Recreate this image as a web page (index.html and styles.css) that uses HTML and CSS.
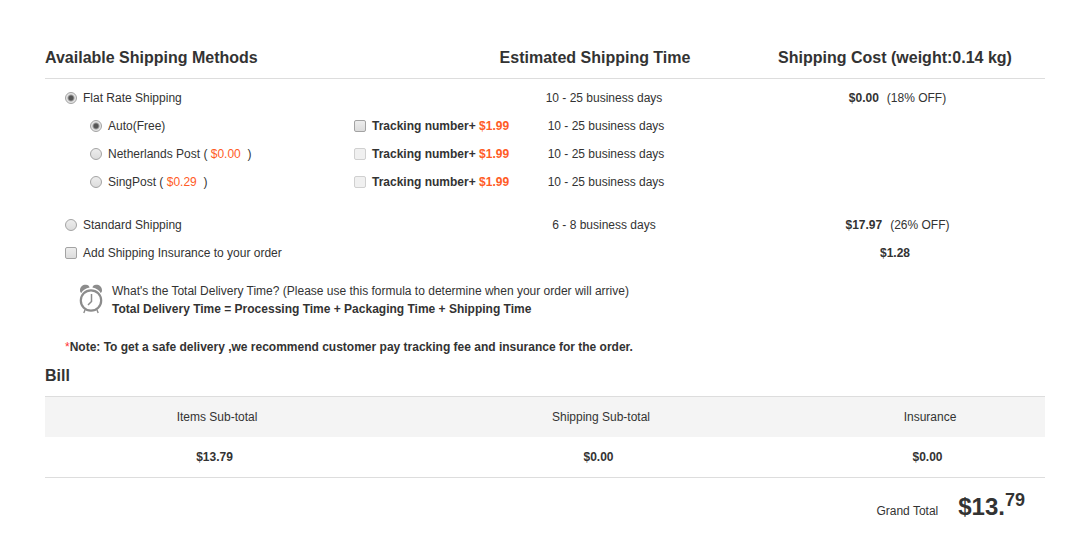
FILE: index.html
```html
<!DOCTYPE html>
<html lang="en">

<head>
    <meta charset="UTF-8">
    <meta name="viewport" content="width=device-width, initial-scale=1.0">
    <title>Shipping Methods</title>
    <link rel="stylesheet" href="styles.css">
</head>

<body>

    <form class="checkout">
        <table class="shipping">
            <thead>
                <tr>
                    <th class="col-method">Available Shipping Methods</th>
                    <th class="col-time">Estimated Shipping Time</th>
                    <th class="col-cost">Shipping Cost (weight:0.14 kg)</th>
                </tr>
            </thead>
            <tbody>
                <tr class="first">
                    <td>
                        <label class="option"><input type="radio" name="shipping" checked>Flat Rate Shipping</label>
                    </td>
                    <td class="time">10 - 25 business days</td>
                    <td class="cost"><b>$0.00</b><span class="off">(18% OFF)</span></td>
                </tr>
                <tr class="sub">
                    <td>
                        <div class="carrier">
                            <label class="option"><input type="radio" name="carrier" checked>Auto(Free)</label>
                            <label class="option tracking"><input type="checkbox"><span>Tracking number+ <em>$1.99</em></span></label>
                        </div>
                    </td>
                    <td class="time">10 - 25 business days</td>
                    <td></td>
                </tr>
                <tr class="sub">
                    <td>
                        <div class="carrier">
                            <label class="option"><input type="radio" name="carrier"><span>Netherlands Post ( <em>$0.00</em>&nbsp; )</span></label>
                            <label class="option tracking"><input type="checkbox" disabled><span>Tracking number+ <em>$1.99</em></span></label>
                        </div>
                    </td>
                    <td class="time">10 - 25 business days</td>
                    <td></td>
                </tr>
                <tr class="sub">
                    <td>
                        <div class="carrier">
                            <label class="option"><input type="radio" name="carrier"><span>SingPost ( <em>$0.29</em>&nbsp; )</span></label>
                            <label class="option tracking"><input type="checkbox" disabled><span>Tracking number+ <em>$1.99</em></span></label>
                        </div>
                    </td>
                    <td class="time">10 - 25 business days</td>
                    <td></td>
                </tr>
                <tr class="standard">
                    <td>
                        <label class="option"><input type="radio" name="shipping">Standard Shipping</label>
                    </td>
                    <td class="time">6 - 8 business days</td>
                    <td class="cost"><b>$17.97</b><span class="off">(26% OFF)</span></td>
                </tr>
                <tr>
                    <td>
                        <label class="option"><input type="checkbox" name="insurance">Add Shipping Insurance to your order</label>
                    </td>
                    <td></td>
                    <td class="insurance-cost"><b>$1.28</b></td>
                </tr>
            </tbody>
        </table>

        <div class="delivery">
            <svg class="clock" width="24" height="30" viewBox="0 0 24 30" fill="none" stroke="#8c8c8c">
                <path d="M1 6.500C1 2.500 4 0.600 7 0.800C9 1 10.200 2 10.600 3.400C6.800 4 3.800 6 2.300 9C1.500 8.400 1 7.500 1 6.500Z" fill="#8c8c8c" stroke="none"/>
                <path d="M23 6.500C23 2.500 20 0.600 17 0.800C15 1 13.800 2 13.400 3.400C17.200 4 20.200 6 21.700 9C22.500 8.400 23 7.500 23 6.500Z" fill="#8c8c8c" stroke="none"/>
                <circle cx="12" cy="16.500" r="10.200" stroke-width="2.200"/>
                <path d="M12.500 10V17.500L9 21" stroke-width="1.500"/>
                <path d="M6 26L4.800 29M18 26L19.200 29" stroke-width="1.400"/>
            </svg>
            <div class="delivery-text">
                What's the Total Delivery Time? (Please use this formula to determine when your order will arrive)<br>
                <b>Total Delivery Time = Processing Time + Packaging Time + Shipping Time</b>
            </div>
        </div>

        <p class="note"><span>*</span><b>Note: To get a safe delivery ,we recommend customer pay tracking fee and insurance for the order.</b></p>

        <h2>Bill</h2>
        <table class="bill">
            <thead>
                <tr>
                    <th class="items">Items Sub-total</th>
                    <th>Shipping Sub-total</th>
                    <th class="insurance">Insurance</th>
                </tr>
            </thead>
            <tbody>
                <tr>
                    <td>$13.79</td>
                    <td>$0.00</td>
                    <td>$0.00</td>
                </tr>
            </tbody>
        </table>

        <div class="total">
            <span>Grand Total</span>
            <strong>$13.<sup>79</sup></strong>
        </div>
    </form>

</body>

</html>
```

FILE: styles.css
```css
body {
    margin: 0;
    background: #fff;
    color: #333;
    font-family: Arial, "Liberation Sans", sans-serif;
    font-size: 12px;
    line-height: 18px;
}

.checkout {
    margin: 36px 34px 0 45px;
}

table {
    width: 100%;
    border-collapse: separate;
    border-spacing: 0;
    table-layout: fixed;
}

td,
th {
    padding: 0;
}

/* shipping methods */
.shipping th {
    height: 40px;
    padding-top: 2px;
    border-bottom: 1px solid #ddd;
    font-size: 16px;
    text-align: center;
}

.shipping .col-method {
    width: 40%;
    text-align: left;
}

.shipping td {
    height: 28px;
    padding-left: 20px;
}

.shipping .first td {
    padding-top: 5px;
}

.shipping .standard td {
    padding-top: 15px;
}

.shipping .sub td {
    padding-left: 45px;
}

.shipping .time {
    padding-left: 18px;
    text-align: center;
}

.shipping .sub .time {
    padding-left: 22px;
}

.shipping .cost {
    padding-left: 5px;
    text-align: center;
}

.shipping .insurance-cost {
    padding-left: 0;
    text-align: center;
}

.off {
    margin-left: 8px;
}

.carrier {
    display: grid;
    grid-template-columns: 264px 1fr;
}

.option {
    display: flex;
    align-items: center;
    gap: 6px;
    white-space: nowrap;
}

.option em {
    color: #ff5c26;
    font-style: normal;
}

.tracking {
    font-weight: bold;
}

input {
    appearance: none;
    flex: none;
    width: 12px;
    height: 12px;
    margin: 0 0 1px;
    border: 1px solid #a3a3a3;
    border-radius: 2px;
    background: linear-gradient(#ededed, #dcdcdc);
}

input[type="radio"] {
    border-radius: 50%;
}

input[type="radio"]:checked {
    background: radial-gradient(circle, #555 0 2px, #e4e4e4 4px);
}

input[type="checkbox"]:checked {
    background: #555;
}

input:disabled {
    border-color: #d0d0d0;
    background: #f0f0f0;
}

/* delivery time */
.delivery {
    display: flex;
    gap: 9px;
    margin: 15px 0 0 34px;
}

.clock {
    margin-top: 2px;
}

.note {
    margin: 20px 0 0 20px;
}

.note span {
    color: #f33;
}

/* bill */
h2 {
    margin: 11px 0;
    font-size: 16px;
    line-height: 18px;
}

.bill th,
.bill td {
    height: 40px;
    text-align: center;
}

.bill th {
    padding-left: 2px;
    border-top: 1px solid #ddd;
    background: #f4f4f4;
    font-weight: normal;
}

.bill td {
    padding-right: 3px;
    border-bottom: 1px solid #ddd;
    font-weight: bold;
}

.bill .items {
    width: 34%;
}

.bill .insurance {
    width: 23%;
}

.total {
    display: flex;
    justify-content: flex-end;
    align-items: baseline;
    gap: 20px;
    padding: 13px 20px 0 0;
}

.total strong {
    font-size: 24px;
    line-height: 32px;
}

.total sup {
    font-size: 18px;
    line-height: 18px;
}
```
